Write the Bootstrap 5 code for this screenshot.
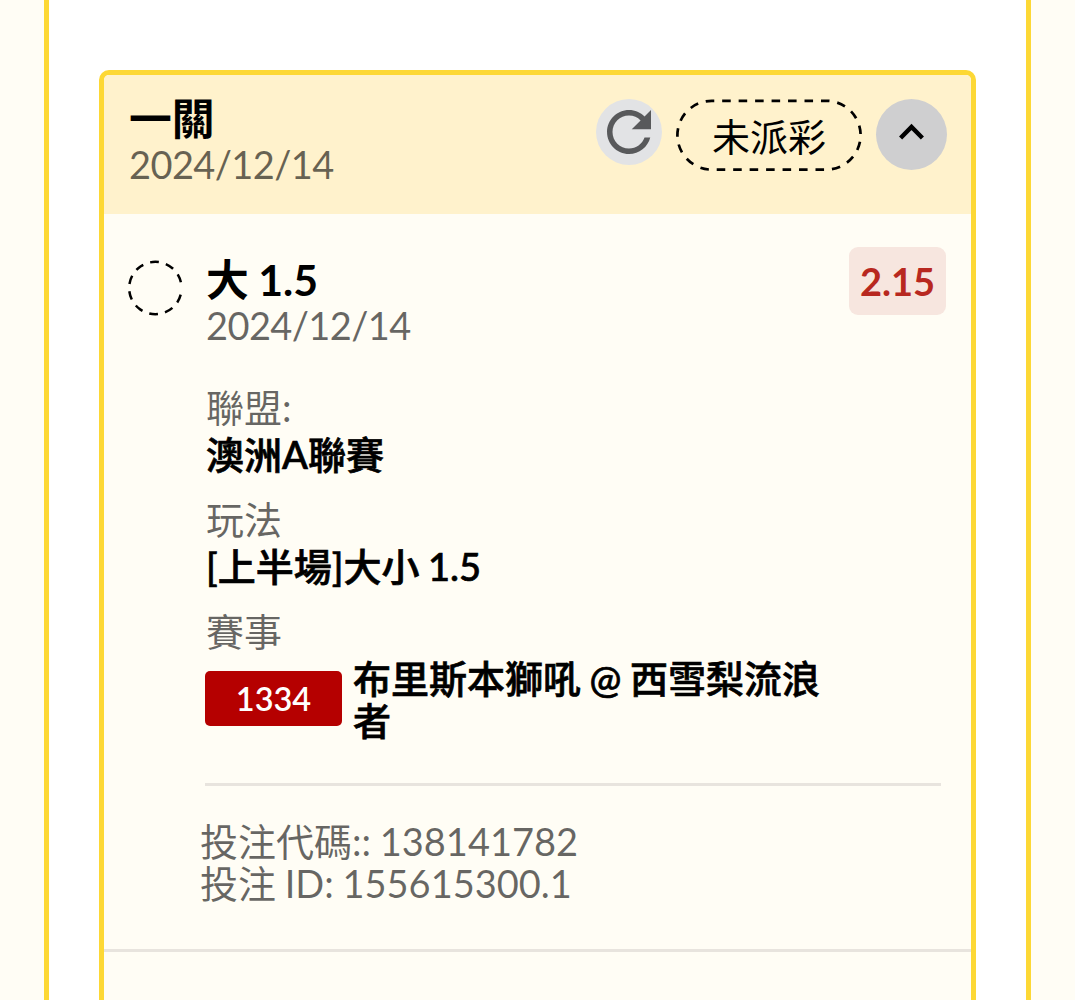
<!DOCTYPE html>
<html lang="zh-Hant">
<head>
    <meta charset="UTF-8">
    <meta name="viewport" content="width=device-width, initial-scale=1.0">
    <title>投注紀錄</title>
    <link href="https://cdn.jsdelivr.net/npm/bootstrap@5.3.0/dist/css/bootstrap.min.css" rel="stylesheet">
    <style>
        body {
            font-family: Lato, 'Noto Sans CJK TC', sans-serif;
            font-size: 38px;
            line-height: 41.5px;
            word-spacing: -1px;
            color: #000;
            background: #fffdf5;
        }
        .page-panel {
            height: 1000px;
            margin: 0 44px;
            padding: 70px 50px 0;
            border: solid #fdd835;
            border-width: 0 5px;
        }
        .bet-card {
            height: 960px;
            border: 5px solid #fdd835;
            border-radius: 10px;
            background: #fffdf5;
        }
        .bet-header {
            height: 139px;
            padding: 21px 24px 0 25px;
            background: #fff2cc;
        }
        .title-text {
            font-size: 42.8px;
            line-height: 46px;
            font-weight: 700;
        }
        .muted-text {
            color: rgba(0, 0, 0, .6);
        }
        .date-text {
            line-height: 45px;
            letter-spacing: -.6px;
        }
        .header-tools {
            gap: 14px;
            padding-top: 3px;
        }
        .refresh-btn {
            width: 66px;
            height: 66px;
            background: #e2e3e5;
            color: #58595b;
        }
        .status-pill {
            width: 186px;
            height: 71px;
            padding-top: 4px;
        }
        .toggle-btn {
            width: 71px;
            height: 71px;
            background: #cfcfd0;
        }
        .bet-body {
            height: 738px;
            padding: 33px 25px 0 24px;
            border-bottom: 3px solid #e8e4de;
        }
        .pending-mark {
            width: 56px;
            margin: 13px 22px 0 0;
        }
        .bet-title {
            padding-top: 10px;
        }
        .odds-tag {
            width: 97px;
            height: 68px;
            margin-bottom: 1px;
            padding-top: 2px;
            border-radius: 9px;
            background: #f7e6df;
            color: #b82820;
            font-weight: 700;
        }
        .detail-list {
            padding-top: 36px;
        }
        .detail-group {
            margin-bottom: 18px;
            line-height: 47px;
        }
        /* a little heavier than medium, lighter than bold */
        .detail-value {
            font-weight: 500;
            -webkit-text-stroke: .7px #000;
        }
        .match-row {
            margin: 1px 0 0 -1px;
        }
        .match-no {
            width: 137px;
            height: 55px;
            border-radius: 5px;
            background: #b50000;
            font-size: 32.5px;
            font-weight: 600;
        }
        .match-name {
            width: 480px;
            margin-left: 11px;
            padding-top: 2px;
        }
        .detail-line {
            height: 3px;
            margin: 42px 5px 35px -1px;
            background: #e8e4de;
        }
        .bet-ids {
            margin-left: -6px;
        }
    </style>
</head>
<body class="overflow-hidden">
<div class="page-panel bg-white">
    <div class="bet-card overflow-hidden">
        <div class="bet-header d-flex justify-content-between align-items-start">
            <div>
                <div class="title-text">一關</div>
                <div class="date-text muted-text">2024/12/14</div>
            </div>
            <div class="header-tools d-flex align-items-start">
                <div class="refresh-btn rounded-circle d-flex">
                    <svg width="66" height="66" viewBox="0 0 24 24" fill="currentColor">
                        <path d="M17.65 6.35C16.2 4.9 14.21 4 12 4c-4.42 0-7.99 3.58-7.99 8s3.57 8 7.99 8c3.73 0 6.84-2.55 7.73-6h-2.08c-.82 2.33-3.04 4-5.65 4-3.31 0-6-2.69-6-6s2.69-6 6-6c1.66 0 3.14.69 4.22 1.78L13 11h7V4l-2.35 2.35z"/>
                    </svg>
                </div>
                <div class="status-pill position-relative d-flex justify-content-center align-items-center">
                    <svg class="position-absolute top-0 start-0" width="186" height="72" fill="none" stroke="#000" stroke-width="2.7">
                        <rect x="1.4" y="1.8" width="183.2" height="68.8" rx="34.4" pathLength="27" stroke-dasharray=".52 .48" stroke-dashoffset=".37"/>
                    </svg>
                    <span>未派彩</span>
                </div>
                <div class="toggle-btn rounded-circle d-flex">
                    <svg width="71" height="71" fill="none" stroke="#000" stroke-width="4.4">
                        <path d="M24.6 39l10.9-11 10.9 11"/>
                    </svg>
                </div>
            </div>
        </div>

        <div class="bet-body d-flex align-items-start">
            <div class="pending-mark d-flex flex-shrink-0">
                <svg width="56" height="56" fill="none" stroke="#000" stroke-width="2.5">
                    <path d="M52.7 34.6A26.2 26.2 0 1 1 52.9 22.3" pathLength="333" stroke-dasharray="19 15.9"/>
                </svg>
            </div>
            <div class="flex-grow-1">
                <div class="d-flex justify-content-between align-items-start">
                    <div class="bet-title">
                        <div class="title-text">大 1.5</div>
                        <div class="date-text muted-text">2024/12/14</div>
                    </div>
                    <div class="odds-tag d-flex justify-content-center align-items-center">2.15</div>
                </div>

                <div class="detail-list">
                    <div class="detail-group">
                        <div class="muted-text">聯盟:</div>
                        <div class="detail-value">澳洲A聯賽</div>
                    </div>
                    <div class="detail-group">
                        <div class="muted-text">玩法</div>
                        <div class="detail-value">[上半場]大小 1.5</div>
                    </div>
                    <div class="detail-group mb-0">
                        <div class="muted-text">賽事</div>
                    </div>
                    <div class="match-row d-flex align-items-center">
                        <div class="match-no text-white d-flex justify-content-center align-items-center">1334</div>
                        <div class="match-name detail-value">布里斯本獅吼 @ 西雪梨流浪者</div>
                    </div>
                </div>

                <div class="detail-line"></div>

                <div class="bet-ids muted-text">
                    <div>投注代碼:: 138141782</div>
                    <div>投注 ID: 155615300.1</div>
                </div>
            </div>
        </div>
    </div>
</div>
<script src="https://cdn.jsdelivr.net/npm/bootstrap@5.3.0/dist/js/bootstrap.bundle.min.js"></script>
</body>
</html>
